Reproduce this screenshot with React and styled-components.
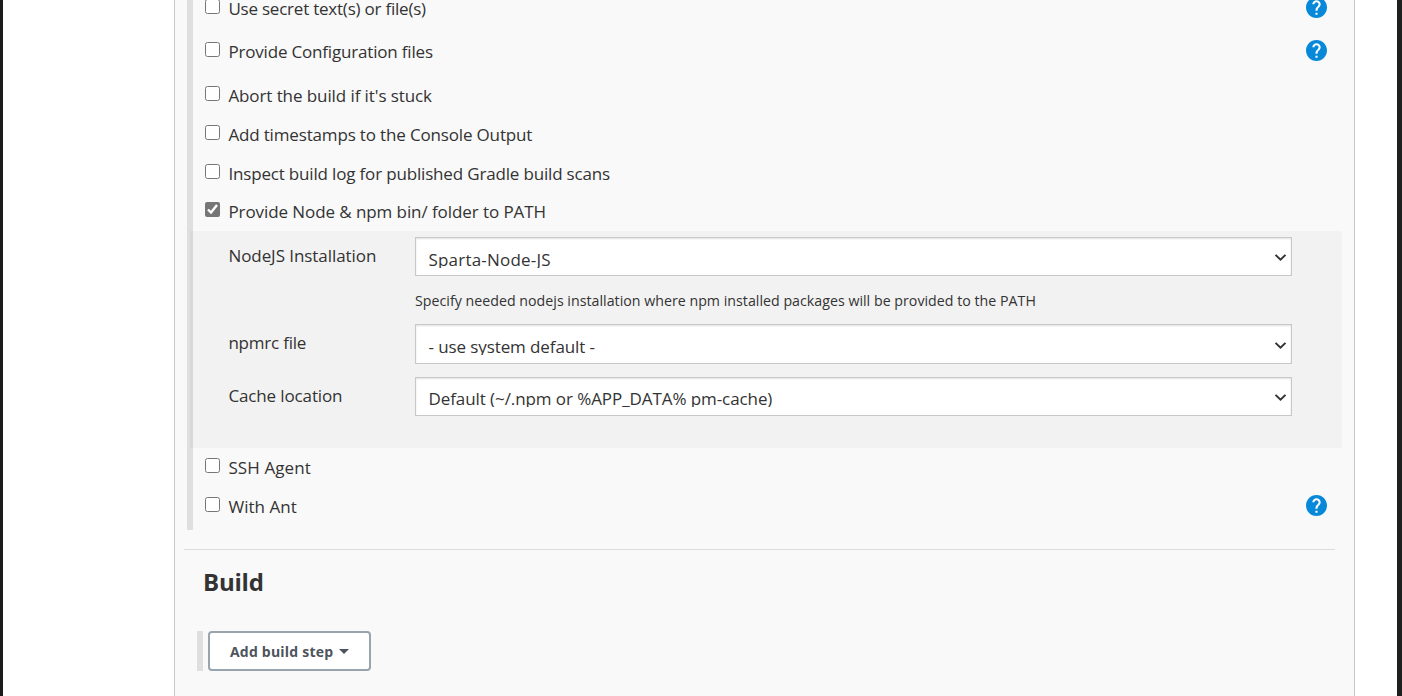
import React from "react";
import styled, { createGlobalStyle } from "styled-components";

const GlobalStyle = createGlobalStyle`
  * { box-sizing: border-box; }
  body {
    margin: 0;
    background: #fff;
    color: #333;
    font-family: "Open Sans", "Noto Sans", sans-serif;
    overflow: hidden;
  }
`;

const Page = styled.div`
  display: flex;
  justify-content: space-between;
  width: 1402px;
  height: 696px;
  overflow: hidden;
  border-left: 3px solid #1b1b1b;
  border-right: 5px solid #1e1f1f;
`;

const ConfigPanel = styled.main`
  width: 1181px;
  height: 696px;
  margin-left: 171px;
  border: solid #c8c8c8;
  border-width: 0 1px;
  background: #f9f9f9;
`;

const OptionList = styled.section`
  width: 1155px;
  margin: -9px 0 0 12px;
  background: linear-gradient(#dfdfdf, #dfdfdf) left top / 6px 100% no-repeat;
`;

const OptionRow = styled.div`
  display: flex;
  align-items: flex-start;
  height: ${(p) => p.$height}px;
  padding-left: 18px;
`;

const Checkbox = styled.input.attrs({ type: "checkbox" })`
  width: 15px;
  height: 15px;
  margin: 8px 8.4px 0 0;
  accent-color: #767676;
`;

const Label = styled.label`
  margin-top: 5px;
  font-size: 17px;
  line-height: 25px;
  white-space: pre;
  letter-spacing: ${(p) => p.$spacing || 0}px;
`;

const HelpButton = styled.a`
  display: block;
  width: 21px;
  height: 21px;
  margin: 6px 15px 0 auto;
`;

const FieldGroup = styled.div`
  height: 217px;
  margin: 0 0 2px 3px;
  padding-top: 6px;
  background: rgba(0, 0, 0, 0.028);
`;

const Field = styled.div`
  display: flex;
  padding-left: 38.4px;
  margin-bottom: ${(p) => p.$gap}px;
`;

const FieldLabel = styled(Label)`
  width: 186.6px;
  margin-top: 6px;
`;

const SelectBox = styled.div`
  display: flex;
  align-items: flex-start;
  justify-content: space-between;
  width: 877px;
  height: ${(p) => p.$height}px;
  padding: 0 4px 0 12.5px;
  border: 1px solid #c8c8c8;
  background: #fff;
  box-shadow: inset 0 1px 2px rgba(0, 0, 0, 0.12);
`;

const SelectValue = styled.span`
  height: 21px;
  margin-top: ${(p) => p.$top}px;
  overflow: hidden;
  font-size: 17px;
  line-height: 25px;
  white-space: pre;
  letter-spacing: ${(p) => p.$spacing || 0}px;
`;

const Chevron = styled.svg`
  width: 13px;
  height: 9px;
  margin-top: ${(p) => p.$top}px;
`;

const Hint = styled.p`
  margin: 0 0 12px 225px;
  height: 22px;
  font-size: 14.2px;
  line-height: 22px;
  white-space: pre;
  letter-spacing: 0.02px;
`;

const Divider = styled.hr`
  width: 1151px;
  height: 1px;
  margin: 19px 0 0 9px;
  border: 0;
  background: #dcdcdc;
`;

const Heading = styled.h2`
  margin: 14px 0 0 28px;
  font-size: 24px;
  line-height: 36px;
  font-weight: 700;
  letter-spacing: -0.2px;
`;

const BuildSteps = styled.div`
  margin: 31px 0 0 22px;
  padding-left: 5px;
  border-left: 6px solid #dfdfdf;
  height: 40px;
`;

const StepButton = styled.button`
  display: flex;
  align-items: center;
  width: 163px;
  height: 40px;
  padding: 0 0 0 20px;
  border: 2px solid #98a4ae;
  border-radius: 4px;
  background: #fff;
  color: #4d545d;
  font: 700 14px "Open Sans", sans-serif;
  white-space: nowrap;
  letter-spacing: 0.21px;
`;

const Caret = styled.span`
  margin-left: 6px;
  border: 5px solid transparent;
  border-top-color: #4d545d;
  border-bottom: 0;
`;

function Help() {
  return (
    <HelpButton aria-label="Help">
      <svg width="21" height="21" viewBox="2 2 20 20" fill="#0788d9">
        <circle cx="12" cy="12" r="8" fill="#fff" />
        <path d="M12 2C6.48 2 2 6.48 2 12s4.48 10 10 10 10-4.48 10-10S17.52 2 12 2zm1 17h-2v-2h2v2zm2.07-7.75l-.9.92C13.45 12.9 13 13.5 13 15h-2v-.5c0-1.1.45-2.1 1.17-2.83l1.24-1.26c.37-.36.59-.86.59-1.41 0-1.1-.9-2-2-2s-2 .9-2 2H8c0-2.21 1.79-4 4-4s4 1.79 4 4c0 .88-.36 1.68-.93 2.25z" />
      </svg>
    </HelpButton>
  );
}

function Option({ text, height, spacing, checked, help }) {
  return (
    <OptionRow $height={height}>
      <Checkbox defaultChecked={checked} />
      <Label $spacing={spacing}>{text}</Label>
      {help && <Help />}
    </OptionRow>
  );
}

function SelectField({ label, labelSpacing, value, spacing, height, gap, top = 9, arrowTop = 15 }) {
  return (
    <Field $gap={gap}>
      <FieldLabel $spacing={labelSpacing}>{label}</FieldLabel>
      <SelectBox $height={height}>
        <SelectValue $spacing={spacing} $top={top}>{value}</SelectValue>
        <Chevron viewBox="0 0 13 9" $top={arrowTop}>
          <path d="M1.5 1.9 L6.5 6.7 L11.5 1.9" fill="none" stroke="#333" strokeWidth="2" />
        </Chevron>
      </SelectBox>
    </Field>
  );
}

export default function App() {
  return (
    <Page>
      <GlobalStyle />
      <ConfigPanel>
        <OptionList>
          <Option text="Use secret text(s) or file(s)" height={43} spacing={-0.22} help />
          <Option text="Provide Configuration files" height={44} spacing={-0.18} help />
          <Option text="Abort the build if it's stuck" height={39} spacing={-0.09} />
          <Option text="Add timestamps to the Console Output" height={39} spacing={-0.16} />
          <Option text="Inspect build log for published Gradle build scans" height={38} spacing={-0.17} />
          <Option text="Provide Node &amp; npm bin/ folder to PATH" height={37} spacing={-0.08} checked />
          <FieldGroup>
            <SelectField label="NodeJS Installation" labelSpacing={-0.06} value="Sparta-Node-JS" spacing={0.2} height={39} gap={14} />
            <Hint>Specify needed nodejs installation where npm installed packages will be provided to the PATH</Hint>
            <SelectField label="npmrc file" labelSpacing={-0.22} value="- use system default -" spacing={-0.1} height={40} gap={13} arrowTop={16} />
            <SelectField label="Cache location" labelSpacing={-0.13} value="Default (~/.npm or %APP_DATA% pm-cache)" spacing={-0.08} height={39} gap={0} top={8} />
          </FieldGroup>
          <Option text="SSH Agent" height={39} spacing={0.1} />
          <Option text="With Ant" height={41} spacing={0.05} help />
        </OptionList>
        <Divider />
        <Heading>Build</Heading>
        <BuildSteps>
          <StepButton>
            Add build step
            <Caret />
          </StepButton>
        </BuildSteps>
      </ConfigPanel>
    </Page>
  );
}
